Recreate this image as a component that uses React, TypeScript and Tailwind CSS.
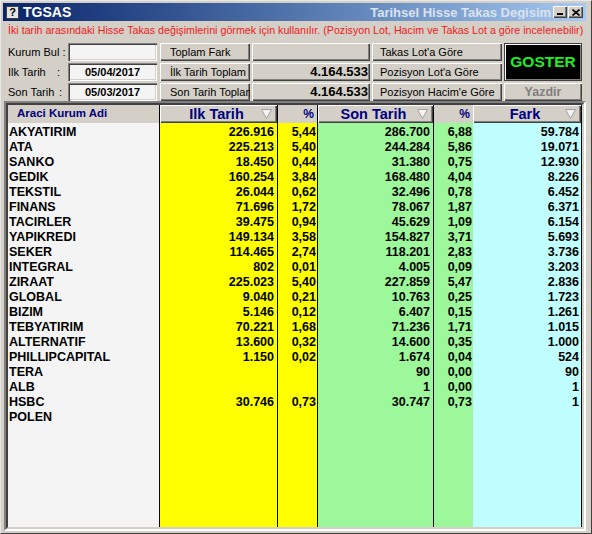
import React from 'react';

const rows: string[][] = [
  ['AKYATIRIM', '226.916', '5,44', '286.700', '6,88', '59.784'],
  ['ATA', '225.213', '5,40', '244.284', '5,86', '19.071'],
  ['SANKO', '18.450', '0,44', '31.380', '0,75', '12.930'],
  ['GEDIK', '160.254', '3,84', '168.480', '4,04', '8.226'],
  ['TEKSTIL', '26.044', '0,62', '32.496', '0,78', '6.452'],
  ['FINANS', '71.696', '1,72', '78.067', '1,87', '6.371'],
  ['TACIRLER', '39.475', '0,94', '45.629', '1,09', '6.154'],
  ['YAPIKREDI', '149.134', '3,58', '154.827', '3,71', '5.693'],
  ['SEKER', '114.465', '2,74', '118.201', '2,83', '3.736'],
  ['INTEGRAL', '802', '0,01', '4.005', '0,09', '3.203'],
  ['ZIRAAT', '225.023', '5,40', '227.859', '5,47', '2.836'],
  ['GLOBAL', '9.040', '0,21', '10.763', '0,25', '1.723'],
  ['BIZIM', '5.146', '0,12', '6.407', '0,15', '1.261'],
  ['TEBYATIRIM', '70.221', '1,68', '71.236', '1,71', '1.015'],
  ['ALTERNATIF', '13.600', '0,32', '14.600', '0,35', '1.000'],
  ['PHILLIPCAPITAL', '1.150', '0,02', '1.674', '0,04', '524'],
  ['TERA', '', '', '90', '0,00', '90'],
  ['ALB', '', '', '1', '0,00', '1'],
  ['HSBC', '30.746', '0,73', '30.747', '0,73', '1'],
  ['POLEN', '', '', '', '', ''],
];

const raised = 'shadow-[inset_1px_1px_0_#ffffff,inset_-1px_-1px_0_#404040,inset_-2px_-2px_0_#808080]';
const sunken = 'shadow-[inset_1px_1px_0_#808080,inset_2px_2px_0_#404040,inset_-1px_-1px_0_#ffffff,inset_-2px_-2px_0_#d4d0c8]';

function SortArrow() {
  return (
    <svg width="11" height="10" viewBox="0 0 11 10" className="absolute right-[5px] top-[4px]">
      <path d="M0.5 0.5 L10.5 0.5 L5.5 9.5 Z" fill="#f4f4f4" stroke="#a0a0a0" strokeWidth="1" />
    </svg>
  );
}

function HeaderBox({ label }: { label: string }) {
  return (
    <div className={`relative h-[18px] bg-[#d4d0c8] ${raised} flex items-center justify-center text-[14.5px] font-bold text-[#000080] leading-none`}>
      <span className="-ml-[4px]">{label}</span>
      <SortArrow />
    </div>
  );
}

function PctHeader() {
  return (
    <div className="h-[18px] bg-[#d4d0c8] flex items-center justify-end pr-[3px] text-[12px] font-bold text-[#000080] leading-none">
      %
    </div>
  );
}

function Cells({ col, align }: { col: number; align: string }) {
  return (
    <>
      {rows.map((r, i) => (
        <div key={i} className={`h-[15px] leading-[15px] whitespace-nowrap overflow-hidden ${align}`}>
          {r[col]}
        </div>
      ))}
    </>
  );
}

export default function App() {
  return (
    <div className="w-[592px] h-[534px] bg-[#d4d0c8] border border-t-[#e8e8e8] border-l-[#e8e8e8] border-r-[#404040] border-b-[#404040] pl-[2px] pr-[5px] pt-[2px] pb-[2px] flex flex-col font-['Liberation_Sans',Arial,sans-serif] overflow-hidden">
      {/* title bar */}
      <div className="h-[18px] flex items-center bg-gradient-to-r from-[#0a246a] to-[#a6caf0] shrink-0">
        <div className="ml-[3px] w-[13px] h-[13px] bg-[#e4e4e4] border border-[#404040] flex items-center justify-center text-[11px] font-bold text-black leading-none">
          ?
        </div>
        <span className="ml-[4px] text-[14px] font-bold text-white leading-none">TGSAS</span>
        <div className="flex-1 overflow-hidden whitespace-nowrap pl-[299px] text-[13px] font-bold text-[#dce2ec] leading-none">
          Tarihsel Hisse Takas Degisim
        </div>
        <div className="flex items-center mr-[3px] gap-[1px]">
          <div className={`w-[14px] h-[12px] bg-[#d4d0c8] ${raised} relative`}>
            <div className="absolute left-[4px] top-[7px] w-[6px] h-[2px] bg-black" />
          </div>
          <div className={`w-[15px] h-[12px] bg-[#d4d0c8] ${raised} flex items-center justify-center`}>
            <svg width="8" height="7" viewBox="0 0 8 7">
              <path d="M0.5 0.5 L7.5 6.5 M7.5 0.5 L0.5 6.5" stroke="#000" strokeWidth="1.6" />
            </svg>
          </div>
        </div>
      </div>

      {/* info line */}
      <div className="h-[18px] leading-[18px] pl-[5px] text-[10.7px] text-[#f01818] whitespace-nowrap overflow-hidden shrink-0">
        İki tarih arasındaki Hisse Takas değişimlerini görmek için kullanılır. (Pozisyon Lot, Hacim ve Takas Lot a göre incelenebilir)
      </div>

      {/* controls */}
      <div className="mt-[4px] ml-[5px] grid grid-cols-[58px_89px_91px_118px_130px_78px] grid-rows-[18px_18px_18px] gap-x-[2px] gap-y-[2px] text-[11px] text-black shrink-0">
        <div className="flex items-center whitespace-nowrap">Kurum Bul :</div>
        <div className={`bg-[#f4f4f4] ${sunken}`} />
        <div className={`bg-[#d4d0c8] ${raised} flex items-center pl-[10px] ml-[1px] whitespace-nowrap overflow-hidden`}>Toplam Fark</div>
        <div className={`bg-[#d4d0c8] ${raised}`} />
        <div className={`bg-[#d4d0c8] ${raised} flex items-center pl-[8px] whitespace-nowrap`}>Takas Lot'a Göre</div>
        <div className="row-span-2 bg-black border border-[#404040] shadow-[inset_1px_1px_0_#ffffff,inset_-1px_-1px_0_#808080,inset_2px_2px_0_#000,inset_-2px_-2px_0_#000] flex items-center justify-center text-[15.5px] font-bold text-[#1ef01e] leading-none">
          GOSTER
        </div>

        <div className="flex items-center whitespace-nowrap">
          <span className="w-[49px] inline-block">Ilk Tarih</span>:
        </div>
        <div className={`bg-[#f4f4f4] ${sunken} flex items-center justify-center font-bold text-[11px]`}>05/04/2017</div>
        <div className={`bg-[#d4d0c8] ${raised} flex items-center pl-[10px] ml-[1px] whitespace-nowrap overflow-hidden`}>İlk Tarih Toplam</div>
        <div className={`bg-[#d4d0c8] ${raised} flex items-center justify-end pr-[2px] text-[13px] font-bold`}>4.164.533</div>
        <div className={`bg-[#d4d0c8] ${raised} flex items-center pl-[8px] whitespace-nowrap`}>Pozisyon Lot'a Göre</div>

        <div className="flex items-center whitespace-nowrap">
          <span className="w-[51px] inline-block">Son Tarih</span>:
        </div>
        <div className={`bg-[#f4f4f4] ${sunken} flex items-center justify-center font-bold text-[11px]`}>05/03/2017</div>
        <div className={`bg-[#d4d0c8] ${raised} flex items-center pl-[10px] ml-[1px] whitespace-nowrap overflow-hidden`}>Son Tarih Toplam</div>
        <div className={`bg-[#d4d0c8] ${raised} flex items-center justify-end pr-[2px] text-[13px] font-bold`}>4.164.533</div>
        <div className={`bg-[#d4d0c8] ${raised} flex items-center pl-[8px] whitespace-nowrap`}>Pozisyon Hacim'e Göre</div>
        <div className={`bg-[#d4d0c8] ${raised} flex items-center justify-center text-[12.5px] font-bold text-[#808080]`}>Yazdir</div>
      </div>

      {/* grid */}
      <div className="flex-1 ml-[1px] border-2 border-t-[#808080] border-l-[#808080] border-r-white border-b-white">
        <div className="h-full border-2 border-t-[#404040] border-l-[#404040] border-r-[#d4d0c8] border-b-[#d4d0c8] flex text-[12.5px] font-bold text-black">
          <div className="w-[151px] bg-[#f4f4f4] flex flex-col">
            <div className="h-[18px] bg-[#d4d0c8] flex items-center pl-[9px] text-[11.5px] font-bold text-[#000080] leading-none">
              Araci Kurum Adi
            </div>
            <div className="pl-[1px] pt-[2px]">
              <Cells col={0} align="text-left" />
            </div>
          </div>
          <div className="w-[118px] bg-[#ffff00] border-l border-black flex flex-col">
            <HeaderBox label="Ilk Tarih" />
            <div className="pr-[3px] pt-[2px]">
              <Cells col={1} align="text-right" />
            </div>
          </div>
          <div className="w-[40px] bg-[#ffff00] border-l border-black flex flex-col">
            <PctHeader />
            <div className="pr-[1px] pt-[2px]">
              <Cells col={2} align="text-right" />
            </div>
          </div>
          <div className="w-[116px] bg-[#9cf89a] border-l border-black flex flex-col">
            <HeaderBox label="Son Tarih" />
            <div className="pr-[3px] pt-[2px]">
              <Cells col={3} align="text-right" />
            </div>
          </div>
          <div className="w-[40px] bg-[#9cf89a] border-l border-black flex flex-col">
            <PctHeader />
            <div className="pr-[1px] pt-[2px]">
              <Cells col={4} align="text-right" />
            </div>
          </div>
          <div className="w-[109px] bg-[#c0ffff] border-r border-black flex flex-col">
            <HeaderBox label="Fark" />
            <div className="pr-[2px] pt-[2px]">
              <Cells col={5} align="text-right" />
            </div>
          </div>
        </div>
      </div>
    </div>
  );
}
